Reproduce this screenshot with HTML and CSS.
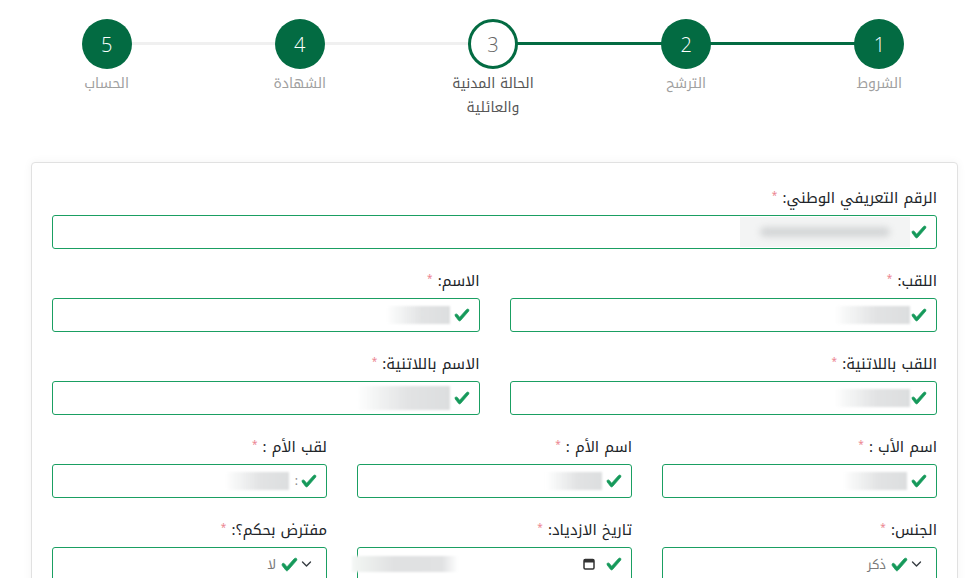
FILE: index.html
```html
<!DOCTYPE html>
<html lang="ar" dir="rtl">
<head>
<meta charset="utf-8">
<title>التسجيل</title>
<link rel="stylesheet" href="styles.css">
</head>
<body>
<ol class="stepper">
  <li class="step done"><span class="circle">1</span><span class="step-label">الشروط</span></li>
  <li class="step done"><span class="circle">2</span><span class="step-label">الترشح</span></li>
  <li class="step current"><span class="circle">3</span><span class="step-label">الحالة المدنية والعائلية</span></li>
  <li class="step todo"><span class="circle">4</span><span class="step-label">الشهادة</span></li>
  <li class="step todo"><span class="circle">5</span><span class="step-label">الحساب</span></li>
</ol>

<form class="card">
  <div class="row row-1">
    <div class="field">
      <label class="label">الرقم التعريفي الوطني: <span class="req">*</span></label>
      <div class="control">
        <svg class="check" viewBox="0 0 8 8"><path d="M2.3 6.73.6 4.53c-.4-1.04.46-1.4 1.1-.8l1.1 1.4 3.4-3.8c.6-.63 1.6-.27 1.2.7l-4 4.6c-.43.5-.8.4-1.1.1z"/></svg>
        <span class="blur-id"><span class="blur-text"></span></span>
      </div>
    </div>
  </div>

  <div class="row row-2">
    <div class="field">
      <label class="label">اللقب: <span class="req">*</span></label>
      <div class="control">
        <svg class="check" viewBox="0 0 8 8"><path d="M2.3 6.73.6 4.53c-.4-1.04.46-1.4 1.1-.8l1.1 1.4 3.4-3.8c.6-.63 1.6-.27 1.2.7l-4 4.6c-.43.5-.8.4-1.1.1z"/></svg>
        <span class="blur blur-m"></span>
      </div>
    </div>
    <div class="field">
      <label class="label">الاسم: <span class="req">*</span></label>
      <div class="control">
        <svg class="check" viewBox="0 0 8 8"><path d="M2.3 6.73.6 4.53c-.4-1.04.46-1.4 1.1-.8l1.1 1.4 3.4-3.8c.6-.63 1.6-.27 1.2.7l-4 4.6c-.43.5-.8.4-1.1.1z"/></svg>
        <span class="blur blur-s"></span>
      </div>
    </div>
  </div>

  <div class="row row-2">
    <div class="field">
      <label class="label">اللقب باللاتنية: <span class="req">*</span></label>
      <div class="control">
        <svg class="check" viewBox="0 0 8 8"><path d="M2.3 6.73.6 4.53c-.4-1.04.46-1.4 1.1-.8l1.1 1.4 3.4-3.8c.6-.63 1.6-.27 1.2.7l-4 4.6c-.43.5-.8.4-1.1.1z"/></svg>
        <span class="blur blur-m"></span>
      </div>
    </div>
    <div class="field">
      <label class="label">الاسم باللاتنية: <span class="req">*</span></label>
      <div class="control">
        <svg class="check" viewBox="0 0 8 8"><path d="M2.3 6.73.6 4.53c-.4-1.04.46-1.4 1.1-.8l1.1 1.4 3.4-3.8c.6-.63 1.6-.27 1.2.7l-4 4.6c-.43.5-.8.4-1.1.1z"/></svg>
        <span class="blur blur-l"></span>
      </div>
    </div>
  </div>

  <div class="row row-3">
    <div class="field">
      <label class="label">اسم الأب : <span class="req">*</span></label>
      <div class="control">
        <svg class="check" viewBox="0 0 8 8"><path d="M2.3 6.73.6 4.53c-.4-1.04.46-1.4 1.1-.8l1.1 1.4 3.4-3.8c.6-.63 1.6-.27 1.2.7l-4 4.6c-.43.5-.8.4-1.1.1z"/></svg>
        <span class="blur blur-s"></span>
      </div>
    </div>
    <div class="field">
      <label class="label">اسم الأم : <span class="req">*</span></label>
      <div class="control">
        <svg class="check" viewBox="0 0 8 8"><path d="M2.3 6.73.6 4.53c-.4-1.04.46-1.4 1.1-.8l1.1 1.4 3.4-3.8c.6-.63 1.6-.27 1.2.7l-4 4.6c-.43.5-.8.4-1.1.1z"/></svg>
        <span class="blur blur-xs"></span>
      </div>
    </div>
    <div class="field">
      <label class="label">لقب الأم : <span class="req">*</span></label>
      <div class="control">
        <svg class="check" viewBox="0 0 8 8"><path d="M2.3 6.73.6 4.53c-.4-1.04.46-1.4 1.1-.8l1.1 1.4 3.4-3.8c.6-.63 1.6-.27 1.2.7l-4 4.6c-.43.5-.8.4-1.1.1z"/></svg>
        <span class="dot">:</span>
        <span class="blur blur-s"></span>
      </div>
    </div>
  </div>

  <div class="row row-3">
    <div class="field">
      <label class="label">الجنس: <span class="req">*</span></label>
      <div class="control select">
        <svg class="chev" viewBox="0 0 16 12"><path d="m2 3 6 6 6-6"/></svg>
        <svg class="check" viewBox="0 0 8 8"><path d="M2.3 6.73.6 4.53c-.4-1.04.46-1.4 1.1-.8l1.1 1.4 3.4-3.8c.6-.63 1.6-.27 1.2.7l-4 4.6c-.43.5-.8.4-1.1.1z"/></svg>
        <span class="value">ذكر</span>
      </div>
    </div>
    <div class="field">
      <label class="label">تاريخ الازدياد: <span class="req">*</span></label>
      <div class="control date">
        <svg class="check" viewBox="0 0 8 8"><path d="M2.3 6.73.6 4.53c-.4-1.04.46-1.4 1.1-.8l1.1 1.4 3.4-3.8c.6-.63 1.6-.27 1.2.7l-4 4.6c-.43.5-.8.4-1.1.1z"/></svg>
        <svg class="cal" viewBox="0 0 12 12"><rect x="1" y="1.5" width="10" height="9.5" rx="1.2"/><path class="cal-top" d="M1 1.5h10v3H1z"/></svg>
        <span class="blur blur-date"></span>
      </div>
    </div>
    <div class="field">
      <label class="label">مفترض بحكم؟: <span class="req">*</span></label>
      <div class="control select">
        <svg class="chev" viewBox="0 0 16 12"><path d="m2 3 6 6 6-6"/></svg>
        <svg class="check" viewBox="0 0 8 8"><path d="M2.3 6.73.6 4.53c-.4-1.04.46-1.4 1.1-.8l1.1 1.4 3.4-3.8c.6-.63 1.6-.27 1.2.7l-4 4.6c-.43.5-.8.4-1.1.1z"/></svg>
        <span class="value">لا</span>
      </div>
    </div>
  </div>
</form>
</body>
</html>
```

FILE: styles.css
```css
* { box-sizing: border-box; }

html, body {
  margin: 0;
  padding: 0;
  background: #fff;
  overflow: hidden;
}

body {
  font-family: "Noto Kufi Arabic", "Noto Sans Arabic", "DejaVu Sans", "Noto Sans", sans-serif;
  color: #212529;
}

/* ---------- stepper ---------- */
.stepper {
  list-style: none;
  margin: 0;
  padding: 19px 0 0 10px;
  display: flex;
}

.step {
  flex: 1 1 0;
  display: flex;
  flex-direction: column;
  align-items: center;
  position: relative;
}

.step::after {
  content: "";
  position: absolute;
  top: 23px;
  right: 50%;
  width: 100%;
  height: 3px;
  background: #f0f0f0;
  z-index: 0;
}

.step.done::after { background: #036b42; }
.step:last-child::after { display: none; }

.circle {
  position: relative;
  z-index: 1;
  width: 50px;
  height: 50px;
  border-radius: 50%;
  background: #036b42;
  color: #fff;
  display: flex;
  align-items: center;
  justify-content: center;
  font-family: "Open Sans", sans-serif;
  font-size: 20px;
  font-weight: 300;
}

.step.current .circle {
  background: #fff;
  border: 3px solid #036b42;
  color: #666;
}

.step-label {
  margin-top: 3px;
  max-width: 110px;
  text-align: center;
  font-size: 14px;
  line-height: 24px;
  color: #a0a0a0;
}

.step.current .step-label { color: #555; }

/* ---------- card ---------- */
.card {
  margin: 42px 18px 0 31px;
  padding: 21px 20px;
  border: 1px solid #e1e1e1;
  border-radius: 4px;
  box-shadow: 0 0 10px rgba(0, 0, 0, 0.05);
  background: #fff;
}

.row {
  display: grid;
  column-gap: 30px;
}

.row-1 { grid-template-columns: 1fr; }
.row-2 { grid-template-columns: 1fr 1fr; }
.row-3 { grid-template-columns: 1fr 1fr 1fr; }

.field { margin-bottom: 18px; }

.label {
  display: block;
  height: 24px;
  line-height: 24px;
  margin-bottom: 7px;
  font-size: 15px;
  color: #212529;
  white-space: nowrap;
}

.req {
  color: #ec8591;
  font-size: 10px;
  vertical-align: 4px;
}

.control {
  height: 34px;
  border: 1px solid #1a9f62;
  border-radius: 3px;
  display: flex;
  align-items: center;
  padding-right: 9px;
  gap: 1px;
}

.check {
  width: 16px;
  height: 16px;
  flex: none;
  fill: #15995a;
  stroke: #15995a;
  stroke-width: 0.35;
  stroke-linejoin: round;
}

.blur {
  height: 18px;
  flex: none;
  background: linear-gradient(to left, #dcdedf 0%, #e2e3e4 45%, rgba(236, 238, 238, 0.6) 80%, rgba(255, 255, 255, 0) 100%);
  filter: blur(1px);
}

.blur-xs { width: 56px; margin-right: 3px; }
.blur-s { width: 64px; margin-right: 3px; }
.blur-m { width: 76px; }
.blur-l { width: 94px; margin-right: 3px; height: 24px; }

.dot {
  color: #888;
  font-size: 12px;
  margin: 0 2px;
}

.blur-id {
  width: 170px;
  height: 30px;
  flex: none;
  background: #f3f4f4;
  display: flex;
  align-items: center;
  justify-content: center;
}

.blur-text {
  width: 130px;
  height: 10px;
  border-radius: 5px;
  background: #d4d6d7;
  filter: blur(3px);
}

/* select */
.select {
  padding-right: 14px;
  gap: 3px;
}

.chev {
  width: 11px;
  height: 8px;
  flex: none;
  fill: none;
  stroke: #343a40;
  stroke-width: 2;
  stroke-linecap: round;
  stroke-linejoin: round;
}

.select .check { width: 17px; height: 17px; }

.value {
  margin-right: 2px;
  font-size: 13px;
  color: #7a7a7a;
}

/* date */
.date { gap: 11px; }

.cal {
  width: 12px;
  height: 12px;
  flex: none;
  fill: none;
  stroke: #333;
  stroke-width: 1.5;
}

.cal-top { fill: #333; stroke: none; }

.blur-date {
  width: 106px;
  height: 16px;
  margin-right: auto;
  margin-left: -6px;
  background: linear-gradient(to left, #fff 0%, #e1e2e3 15%, #e0e1e2 60%, #eef1ef 90%, #f4f7f5 100%);
}
```
